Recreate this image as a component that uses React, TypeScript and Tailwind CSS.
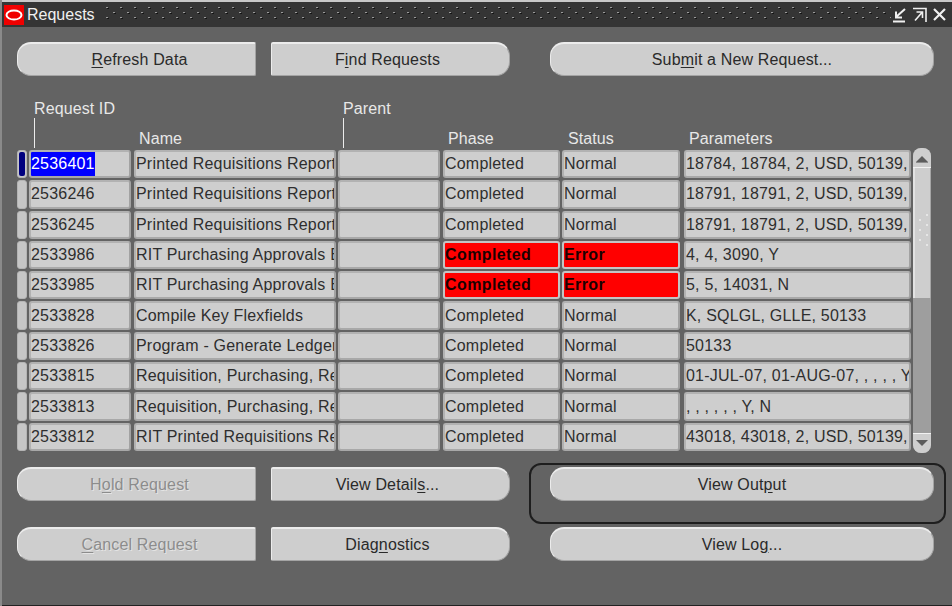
const FONT = "font-['Liberation_Sans',Arial,sans-serif]";

const COLUMNS = [
  { w: "w-[102px]", ml: "ml-[3px]" },
  { w: "w-[202px]", ml: "ml-[3px]" },
  { w: "w-[102px]", ml: "ml-[2px]" },
  { w: "w-[117px]", ml: "ml-[3px]" },
  { w: "w-[118px]", ml: "ml-[2px]" },
  { w: "w-[227px]", ml: "ml-[4px]" },
];

type Req = {
  id: string;
  name: string;
  status: string;
  params: string;
  error?: boolean;
};

const REQUESTS: Req[] = [
  { id: "2536401", name: "Printed Requisitions Report", status: "Normal", params: "18784, 18784, 2, USD, 50139, 50139" },
  { id: "2536246", name: "Printed Requisitions Report", status: "Normal", params: "18791, 18791, 2, USD, 50139, 50139" },
  { id: "2536245", name: "Printed Requisitions Report", status: "Normal", params: "18791, 18791, 2, USD, 50139, 50139" },
  { id: "2533986", name: "RIT Purchasing Approvals Exceptions", status: "Error", params: "4, 4, 3090, Y", error: true },
  { id: "2533985", name: "RIT Purchasing Approvals Exceptions", status: "Error", params: "5, 5, 14031, N", error: true },
  { id: "2533828", name: "Compile Key Flexfields", status: "Normal", params: "K, SQLGL, GLLE, 50133" },
  { id: "2533826", name: "Program - Generate Ledger", status: "Normal", params: "50133" },
  { id: "2533815", name: "Requisition, Purchasing, Receiving", status: "Normal", params: "01-JUL-07, 01-AUG-07, , , , , Y, N" },
  { id: "2533813", name: "Requisition, Purchasing, Receiving", status: "Normal", params: ", , , , , , Y, N" },
  { id: "2533812", name: "RIT Printed Requisitions Report", status: "Normal", params: "43018, 43018, 2, USD, 50139, 50139" },
];

const LEFT_BTN = "w-[239px] rounded-l-[14px] rounded-r-[2px] pl-[6px]";
const RIGHT_BTN = "w-[239px] rounded-r-[14px] rounded-l-[2px] pr-[6px]";
const WIDE_BTN = "w-[384px] rounded-[14px]";

function Btn({
  before,
  mnemonic,
  after,
  shape,
  disabled,
  className = "",
}: {
  before?: string;
  mnemonic?: string;
  after?: string;
  shape: string;
  disabled?: boolean;
  className?: string;
}) {
  return (
    <div
      className={`flex h-[34px] items-center justify-center border-t-2 border-l border-t-[#ececec] border-l-[#ececec] border-r border-b border-r-[#a4a4a4] border-b-[#a4a4a4] bg-[#cecece] text-[16px] tracking-[0.15px] ${shape} ${
        disabled ? "text-[#8c8c8c] [text-shadow:1px_1px_0_#e4e4e4]" : "text-[#2a2a2a]"
      } ${className}`}
    >
      <span>
        {before}
        {mnemonic && <span className="underline underline-offset-2">{mnemonic}</span>}
        {after}
      </span>
    </div>
  );
}

function Cell({
  className,
  error,
  children,
}: {
  className: string;
  error?: boolean;
  children?: React.ReactNode;
}) {
  return (
    <div
      className={`flex h-full shrink-0 items-center overflow-hidden whitespace-nowrap rounded-[3px] border-2 text-[16px] ${className} ${
        error
          ? "border-[#c4c4c4] bg-[#ff0000] font-bold tracking-[0.4px] text-[#1a0000]"
          : "border-t-[#b2b2b2] border-l-[#b2b2b2] border-r-[#a2a2a2] border-b-[#a8a8a8] bg-[#cecece] tracking-[0.2px] text-[#2e2e2e]"
      }`}
    >
      {children}
    </div>
  );
}

function Row({ req, active }: { req: Req; active: boolean }) {
  return (
    <div className="flex min-h-0 flex-1 items-stretch pb-[2px]">
      <div className="flex w-[10px] shrink-0 items-stretch rounded-[3px] border border-[#b4b4b4] bg-[#c6c6c6] p-[1px]">
        {active && <div className="flex-1 rounded-[2px] bg-[#00007f]" />}
      </div>
      <Cell className={`${COLUMNS[0].w} ml-[2px]`}>
        {active ? <span className="bg-[#0000ff] text-white">{req.id}</span> : req.id}
      </Cell>
      <Cell className={`${COLUMNS[1].w} ${COLUMNS[1].ml}`}>{req.name}</Cell>
      <Cell className={`${COLUMNS[2].w} ${COLUMNS[2].ml}`} />
      <Cell className={`${COLUMNS[3].w} ${COLUMNS[3].ml}`} error={req.error}>
        Completed
      </Cell>
      <Cell className={`${COLUMNS[4].w} ${COLUMNS[4].ml}`} error={req.error}>
        {req.status}
      </Cell>
      <Cell className={`${COLUMNS[5].w} ${COLUMNS[5].ml}`}>{req.params}</Cell>
    </div>
  );
}

function ScrollBar() {
  return (
    <div className="ml-[2px] flex h-[305px] w-[18px] shrink-0 flex-col overflow-hidden rounded-[8px] bg-[#9e9e9e]">
      <div className="flex h-[20px] shrink-0 items-center justify-center border-b border-[#f2f2f2] bg-[#cecece] pt-[3px]">
        <svg width="12" height="7" viewBox="0 0 12 7">
          <path d="M6 0 L12 6 H0 Z" fill="#5c5c5c" />
          <path d="M0 6.5 H12" stroke="#8a8a8a" />
        </svg>
      </div>
      <div className="flex h-[130px] shrink-0 items-center justify-center border-r border-[#a6a6a6] border-l-2 border-l-[#e2e2e2] bg-[#cecece] pb-[6px]">
        <svg width="14" height="32" viewBox="0 0 14 32">
          {[
            [10, 1],
            [3, 6],
            [10, 11],
            [3, 16],
            [10, 21],
            [3, 26],
            [10, 31],
          ].map(([x, y]) => (
            <rect key={`${x}-${y}`} x={x} y={y - 1} width="2" height="2" fill="#e6e6e6" />
          ))}
        </svg>
      </div>
      <div className="flex-1" />
      <div className="flex h-[20px] shrink-0 items-center justify-center border-t border-[#f2f2f2] bg-[#cecece] pb-[3px]">
        <svg width="12" height="7" viewBox="0 0 12 7">
          <path d="M6 7 L12 1 H0 Z" fill="#5c5c5c" />
        </svg>
      </div>
    </div>
  );
}

function TitleBar() {
  return (
    <div className="flex h-[27px] shrink-0 items-center border-t-2 border-[#c8c8c8] bg-[#353535] pl-[2px] pr-[6px]">
      <svg width="20" height="20" viewBox="0 0 20 20" className="shrink-0">
        <rect width="20" height="20" fill="#f00000" />
        <ellipse cx="10" cy="10" rx="7.5" ry="4.6" fill="none" stroke="#ffffff" strokeWidth="2" />
      </svg>
      <span className="ml-[3px] text-[16px] text-[#f0f0f0]">Requests</span>
      <svg height="15" className="ml-[11px] min-w-0 flex-1">
        <defs>
          <pattern id="grip" width="14" height="10" patternUnits="userSpaceOnUse">
            <rect x="0" y="0" width="2" height="1" fill="#9a9a9a" />
            <rect x="1" y="1" width="2" height="1" fill="#141414" />
            <rect x="7" y="5" width="2" height="1" fill="#9a9a9a" />
            <rect x="8" y="6" width="2" height="1" fill="#141414" />
          </pattern>
        </defs>
        <rect width="100%" height="15" fill="url(#grip)" />
      </svg>
      <div className="ml-[2px] flex shrink-0 items-center gap-[6px]">
        <svg width="14" height="16" viewBox="0 0 14 16" fill="none" stroke="#f0f0f0" strokeWidth="2">
          <path d="M0 14.5 H12" />
          <path d="M12 2 L3 10 M3 4.5 V10.5 H9" />
        </svg>
        <svg width="14" height="16" viewBox="0 0 14 16" fill="none" stroke="#f0f0f0" strokeWidth="1.6">
          <path d="M0 1.5 H13 V15" />
          <path d="M2 13.5 L9 5.5 M3.5 5 H9.5 V11" />
        </svg>
        <svg width="13" height="13" viewBox="0 0 13 13" fill="none" stroke="#f0f0f0" strokeWidth="2.2">
          <path d="M1 1 L12 12 M12 1 L1 12" />
        </svg>
      </div>
    </div>
  );
}

export default function App() {
  return (
    <div className={`flex h-[606px] w-[952px] flex-col overflow-hidden border-l-2 border-[#8a8a8a] bg-[#636363] ${FONT}`}>
      <TitleBar />
      <div className="flex min-h-0 flex-1 flex-col pl-[15px] pt-[15px]">
        <div className="flex">
          <Btn mnemonic="R" after="efresh Data" shape={LEFT_BTN} />
          <Btn before="F" mnemonic="i" after="nd Requests" shape={RIGHT_BTN} className="ml-[15px]" />
          <Btn before="Sub" mnemonic="m" after="it a New Request..." shape={WIDE_BTN} className="ml-[40px]" />
        </div>

        {/* two-line column prompts with the tick lines under Request ID and Parent */}
        <div className="relative h-[72px] shrink-0 text-[16px] tracking-[0.1px] text-[#e8e8e8]">
          <div className="flex h-[42px] items-end">
            <div className="ml-[17px] flex w-[309px] flex-col">
              <span className="leading-[18px]">Request ID</span>
            </div>
            <span className="leading-[18px]">Parent</span>
          </div>
          <div className="flex h-[30px] items-end">
            <span className="ml-[122px] w-[309px] leading-[18px]">Name</span>
            <span className="w-[120px] leading-[18px]">Phase</span>
            <span className="w-[121px] leading-[18px]">Status</span>
            <span className="leading-[18px]">Parameters</span>
          </div>
          <div className="absolute left-[17px] top-[42px] h-[30px] w-[1px] bg-[#ececec]" />
          <div className="absolute left-[326px] top-[42px] h-[30px] w-[1px] bg-[#ececec]" />
        </div>

        <div className="flex h-[305px] shrink-0 items-start">
          <div className="flex h-[305px] flex-col pt-[2px]">
            {REQUESTS.map((r, i) => (
              <Row key={r.id} req={r} active={i === 0} />
            ))}
          </div>
          <ScrollBar />
        </div>

        <div className="flex">
          <div className="flex flex-col gap-[26px] pt-[14px]">
            <Btn before="H" mnemonic="o" after="ld Request" disabled shape={LEFT_BTN} />
            <Btn mnemonic="C" after="ancel Request" disabled shape={LEFT_BTN} />
          </div>
          <div className="ml-[15px] flex flex-col gap-[26px] pt-[14px]">
            <Btn before="View Detail" mnemonic="s" after="..." shape={RIGHT_BTN} />
            <Btn before="Diag" mnemonic="n" after="ostics" shape={RIGHT_BTN} />
          </div>
          <div className="ml-[19px] flex flex-col">
            <div className="mt-[10px] h-[61px] w-[417px] rounded-[12px] border-2 border-[#1e1e1e] px-[19px] pt-[2px]">
              <Btn before="View Out" mnemonic="p" after="ut" shape={WIDE_BTN} />
            </div>
            <Btn before="View Lo" mnemonic="g" after="..." shape={WIDE_BTN} className="ml-[21px] mt-[3px]" />
          </div>
        </div>
      </div>
      <div className="h-[1px] shrink-0 bg-[#222222]" />
    </div>
  );
}
